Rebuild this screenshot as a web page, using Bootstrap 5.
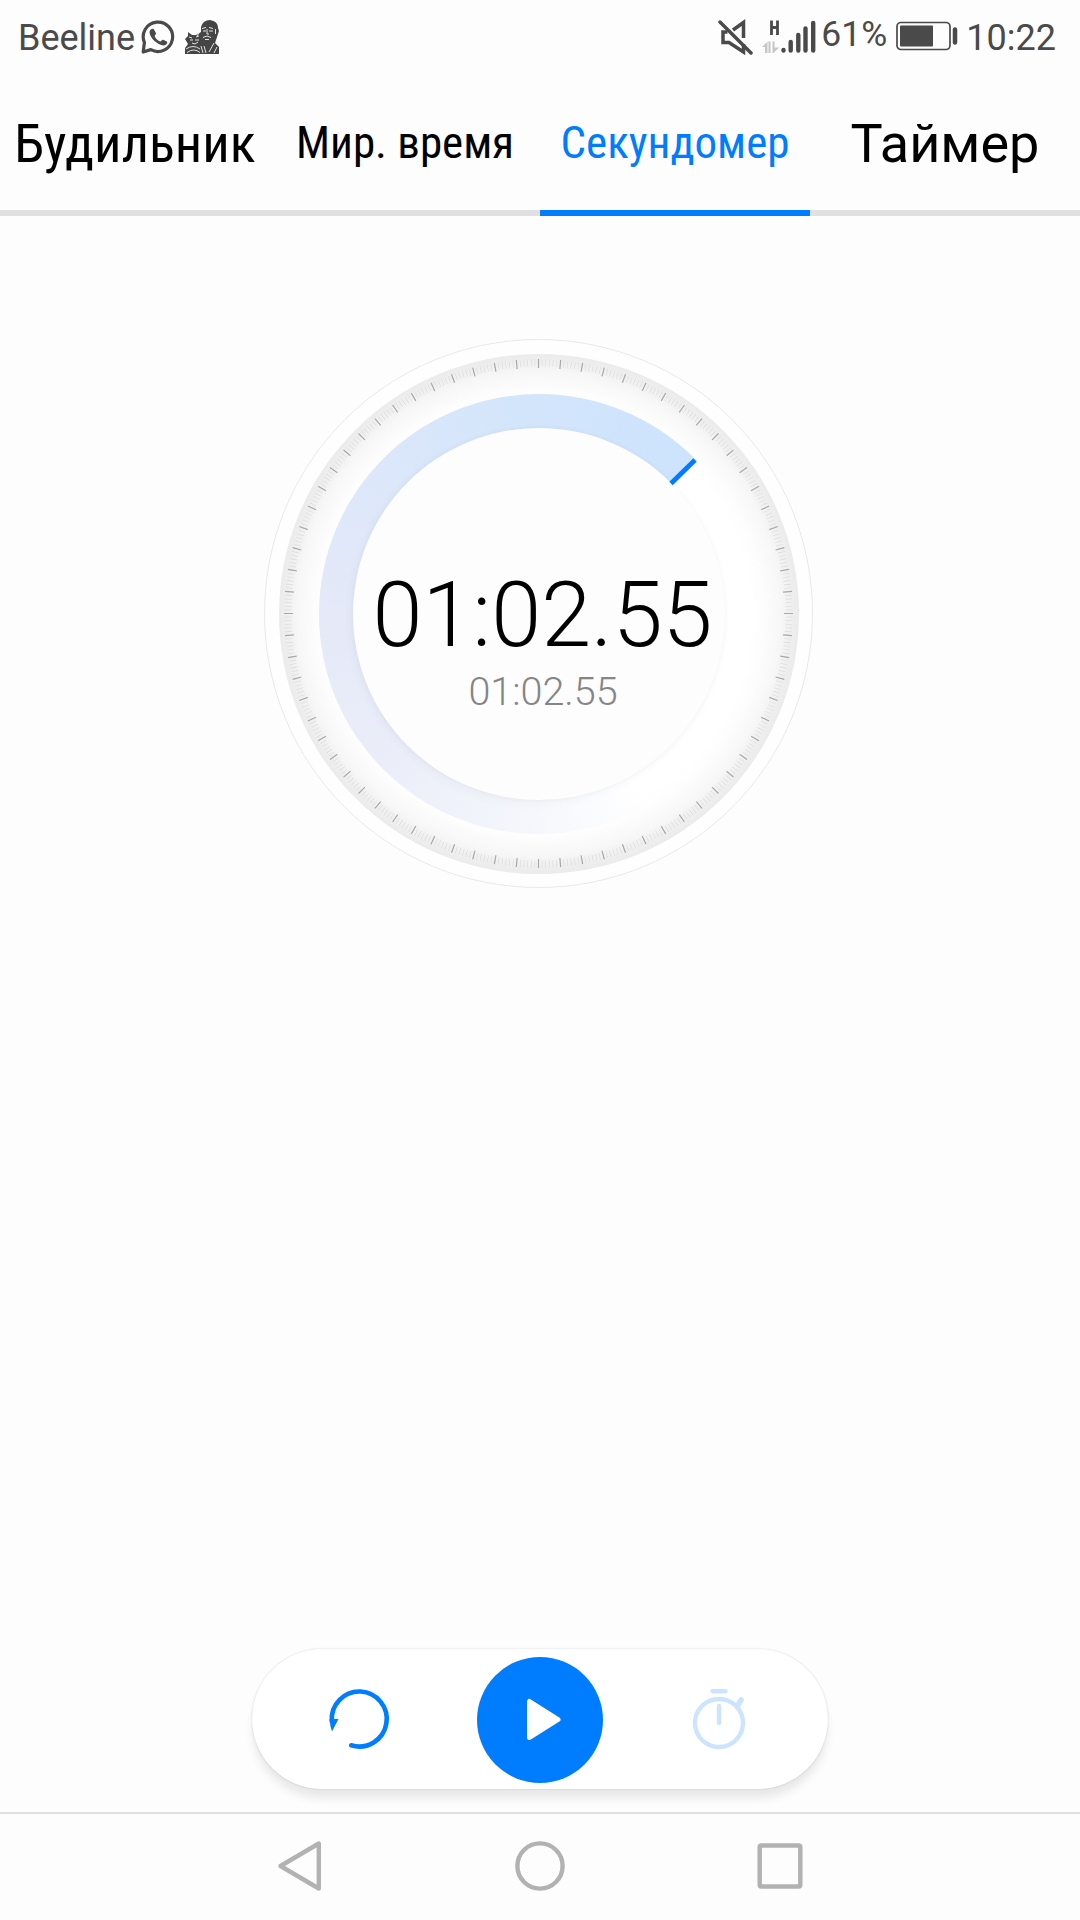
<!DOCTYPE html>
<html lang="ru">
<head>
<meta charset="utf-8">
<meta name="viewport" content="width=device-width, initial-scale=1">
<title>Секундомер</title>
<link href="https://cdn.jsdelivr.net/npm/bootstrap@5.3.0/dist/css/bootstrap.min.css" rel="stylesheet">
<style>
  body { font-family: Roboto, "Noto Sans", sans-serif; background: #fdfdfd; color: #000; }
  .screen { width: 1080px; height: 1920px; overflow: hidden; }
  svg { display: block; flex: none; }

  .statusbar { height: 72px; padding: 0 24px 0 18px; font-size: 36px; line-height: 1; color: #4a4a4a; }
  .statusbar svg { margin-top: 2px; }
  .carrier { padding-top: 3px; width: 122px; }
  .percent { width: 74px; padding-bottom: 3px; font-size: 35.5px; margin-left: 3px; }
  .clock { padding-top: 3px; margin-left: 7px; }

  .tabs { height: 144px; }
  .tabs .nav-link { height: 144px; padding: 5px 0 0; line-height: 1; color: #000; border-radius: 0;
    border-bottom: 6px solid #e0e0e0; font-size: 54px; white-space: nowrap; }
  .tabs .nav-link.narrow { font-stretch: 75%; }
  .tabs .nav-link.compact { font-size: 45px; padding-top: 3px; }
  .tabs .nav-link.active { color: #007dff; border-color: #007dff; }

  .dial { width: 549px; height: 549px; margin: 123px 0 0 264px; display: grid; place-items: center; border-radius: 50%;
    border: 1px solid #e9e9e9; background: #fefefe; }
  .dial > * { grid-area: 1 / 1; border-radius: 50%; }
  .plate { width: 520px; height: 520px;
    background: radial-gradient(circle closest-side, #fff 0, #fff 81%, #fdfdfd 86%, #f7f7f7 93%, #efefef 97%, #ebebeb 100%); }
  .trail { width: 440px; height: 440px;
    background: conic-gradient(from 45.8deg, #fff0 0 104deg, #fafbfe 122deg, #f5f7fc 136deg, #ebeef9 179deg, #e5e9f8 224deg, #dce7fa 265deg, #d2e5fb 314deg, #cde3fd 360deg); }
  .face { width: 372px; height: 372px; background: #fdfdfd;
    box-shadow: 0 0 5px rgba(0,0,0,.03), -2px 3px 11px rgba(0,0,0,.035); }
  .readout { padding-left: 8px; line-height: 1; font-weight: 300; }
  .total { font-size: 90px; margin-top: 56px; }
  .lap { font-size: 39.5px; color: #858585; margin-top: 11px; padding-left: 1px; }

  .controls { width: 576px; height: 140px; margin: 0 auto 23px; border-radius: 70px; background: #fff;
    box-shadow: 0 0 2px rgba(0,0,0,.18), 0 10px 10px -1px rgba(0,0,0,.085); padding: 2px 73px 0 73px; }
  .controls .btn { width: 70px; height: 70px; padding: 0; border: 0; }
  .controls .play { width: 126px; height: 126px; border-radius: 50%; background: #007dff; }
  .navkeys { height: 108px; border-top: 2px solid #e0e0e0; padding-bottom: 2px; }
</style>
</head>
<body>
<div class="screen d-flex flex-column">
  <header class="statusbar d-flex align-items-center">
    <div class="carrier">Beeline</div>
    <svg width="36" height="36" viewBox="0 0 36 36" fill="none" stroke="#4a4a4a">
      <path d="M4.400 23.500A14.700 14.700 0 1 1 10.800 30.600L3.200 33Z" stroke-width="3.200" stroke-linejoin="round"/>
      <path fill="#4a4a4a" stroke="none" d="M10.800 10.500C12 9.500 13.200 9.400 13.900 10.300L16 14.200C16.400 15.200 14.500 16.500 14.700 17.200C15.400 19.400 17.500 21.500 20.200 22.400C21.200 22.600 22.100 20.400 23.100 20.700L26.900 22.600C27.900 23.200 26.800 25.300 25.400 26C22.700 27.300 18.300 25.400 15.100 22.500C12 19.700 9.600 16.200 9.600 13.400C9.600 12.100 10 11.100 10.800 10.500Z"/>
    </svg>
    <svg class="ms-2" width="36" height="36" viewBox="0 0 36 36">
      <path fill="#454545" d="M1 35V29L4 25L1 20L4 17L4 13L8 16H12L17 13L17 8Q19 1 26 1Q34 2 34 9L35 12L33 18L31 24L35 28V35Z"/>
      <g fill="none" stroke="#e2e2e2" stroke-width="1">
        <path d="M18 9.500l4-1M25 8.500l4 1M19 12h3M25 12h4M23 10v5h2M19 18.500q4-3 8 0M31.500 10v5M21 20.500h4M30 24l-5 9M33 28l-3 6M20 27l2 7"/>
        <path d="M5 18l3 1M12 18l3-1M6 21h3M11 21h4M8 24l3 1 3-2M2 30q7-5 14 0M3 33.500q7-5 13 0M17 27l2 7M15 14l-2 3"/>
      </g>
    </svg>
    <svg class="ms-auto" width="36" height="36" viewBox="0 0 36 36" fill="none" stroke="#4a4a4a" stroke-width="3.500">
      <path d="M2 3L33 34" stroke-linecap="round"/><path d="M15 11L25.500 3.500V19M9.500 13H5V23.500H11L25.500 33V25"/>
    </svg>
    <svg width="56" height="36" viewBox="0 0 56 36" class="ms-2">
      <path d="M9.500 1.500V16M15.500 1.500V16M9.500 8.500H15.500" stroke="#4a4a4a" stroke-width="2.800"/>
      <path fill="#c6c6c6" d="M0 28L5.500 22.500V34H3V28ZM6.500 22.500H8.500V34H6.500ZM10.500 22.500H12.500V28.500H17L11.500 34H10.500Z"/>
      <g stroke="#4a4a4a" stroke-width="4.400" stroke-linecap="round"><path d="M21.500 31v.5M28.700 23v8.500M36.300 16v15.500M43.500 9.500v22M51.200 4v27.500"/></g>
    </svg>
    <div class="percent">61%</div>
    <svg width="64" height="32" viewBox="0 0 64 32">
      <rect x="2" y="1.500" width="53" height="27" rx="4" fill="none" stroke="#4a4a4a" stroke-width="1.700"/>
      <rect x="5" y="4.500" width="33" height="21" rx="1" fill="#4a4a4a"/><path d="M60 8.500v13" stroke="#4a4a4a" stroke-width="4.500" stroke-linecap="round"/>
    </svg>
    <div class="clock">10:22</div>
  </header>

  <nav class="tabs nav nav-justified flex-nowrap">
    <a class="nav-link narrow w-25 d-flex align-items-center justify-content-center" href="#">Будильник</a>
    <a class="nav-link narrow compact w-25 d-flex align-items-center justify-content-center" href="#">Мир. время</a>
    <a class="nav-link narrow compact active w-25 d-flex align-items-center justify-content-center" href="#">Секундомер</a>
    <a class="nav-link w-25 d-flex align-items-center justify-content-center" href="#">Таймер</a>
  </nav>

  <main class="flex-grow-1">
    <div class="dial">
      <div class="plate"></div>
      <div class="trail"></div>
      <div class="face"></div>
      <svg width="547" height="547" viewBox="-273.5 -273.5 547 547">
        <circle r="250.500" fill="none" stroke="#dadada" stroke-width="7" stroke-dasharray="1 5" pathLength="2592" stroke-dashoffset=".5"/>
        <circle r="250" fill="none" stroke="#a9a9a9" stroke-width="9" stroke-dasharray="1.200 20.800" pathLength="1584" stroke-dashoffset=".6"/>
        <path d="M132.500 -130L156.500 -153.500" stroke="#007dff" stroke-width="4.800"/>
      </svg>
      <div class="readout text-center">
        <div class="total">01:02.55</div>
        <div class="lap">01:02.55</div>
      </div>
    </div>
  </main>

  <div class="controls d-flex align-items-center justify-content-between">
    <button class="btn" aria-label="Сброс">
      <svg width="70" height="70" viewBox="1 0 70 70">
        <path d="M7.800 36A27.500 27.500 0 1 1 27.200 60.300" fill="none" stroke="#007dff" stroke-width="4.600" stroke-linecap="round"/>
        <path d="M5.500 34H14.500L8 46.500Q6 41 5.500 34Z" fill="#007dff"/>
      </svg>
    </button>
    <button class="btn play d-flex align-items-center justify-content-center" aria-label="Старт">
      <svg width="126" height="126" viewBox="0 0 126 126"><path d="M52.500 44.500V80.500L81 62.500Z" fill="#fff" stroke="#fff" stroke-width="5" stroke-linejoin="round"/></svg>
    </button>
    <button class="btn" aria-label="Круг">
      <svg width="70" height="70" viewBox="1 0 70 70" fill="none" stroke="#cce4ff" stroke-width="4.400">
        <circle cx="35" cy="38" r="24"/><path d="M28.500 6.300H41.500M35 21V38" stroke-linecap="round"/><path d="M53.500 21L57 15" stroke-width="5.500" stroke-linecap="round"/>
      </svg>
    </button>
  </div>

  <footer class="navkeys d-flex align-items-center justify-content-center">
    <svg width="540" height="60" viewBox="270 1836 540 60" fill="none" stroke="#b2b2b2" stroke-width="4.400" stroke-linejoin="round">
      <path d="M280.500 1866L318.800 1843.500V1888.500Z"/><circle cx="540" cy="1866" r="22.600"/><rect x="759.700" y="1845.500" width="40.600" height="41" rx="1.500"/>
    </svg>
  </footer>
</div>
<script src="https://cdn.jsdelivr.net/npm/bootstrap@5.3.0/dist/js/bootstrap.bundle.min.js"></script>
</body>
</html>
